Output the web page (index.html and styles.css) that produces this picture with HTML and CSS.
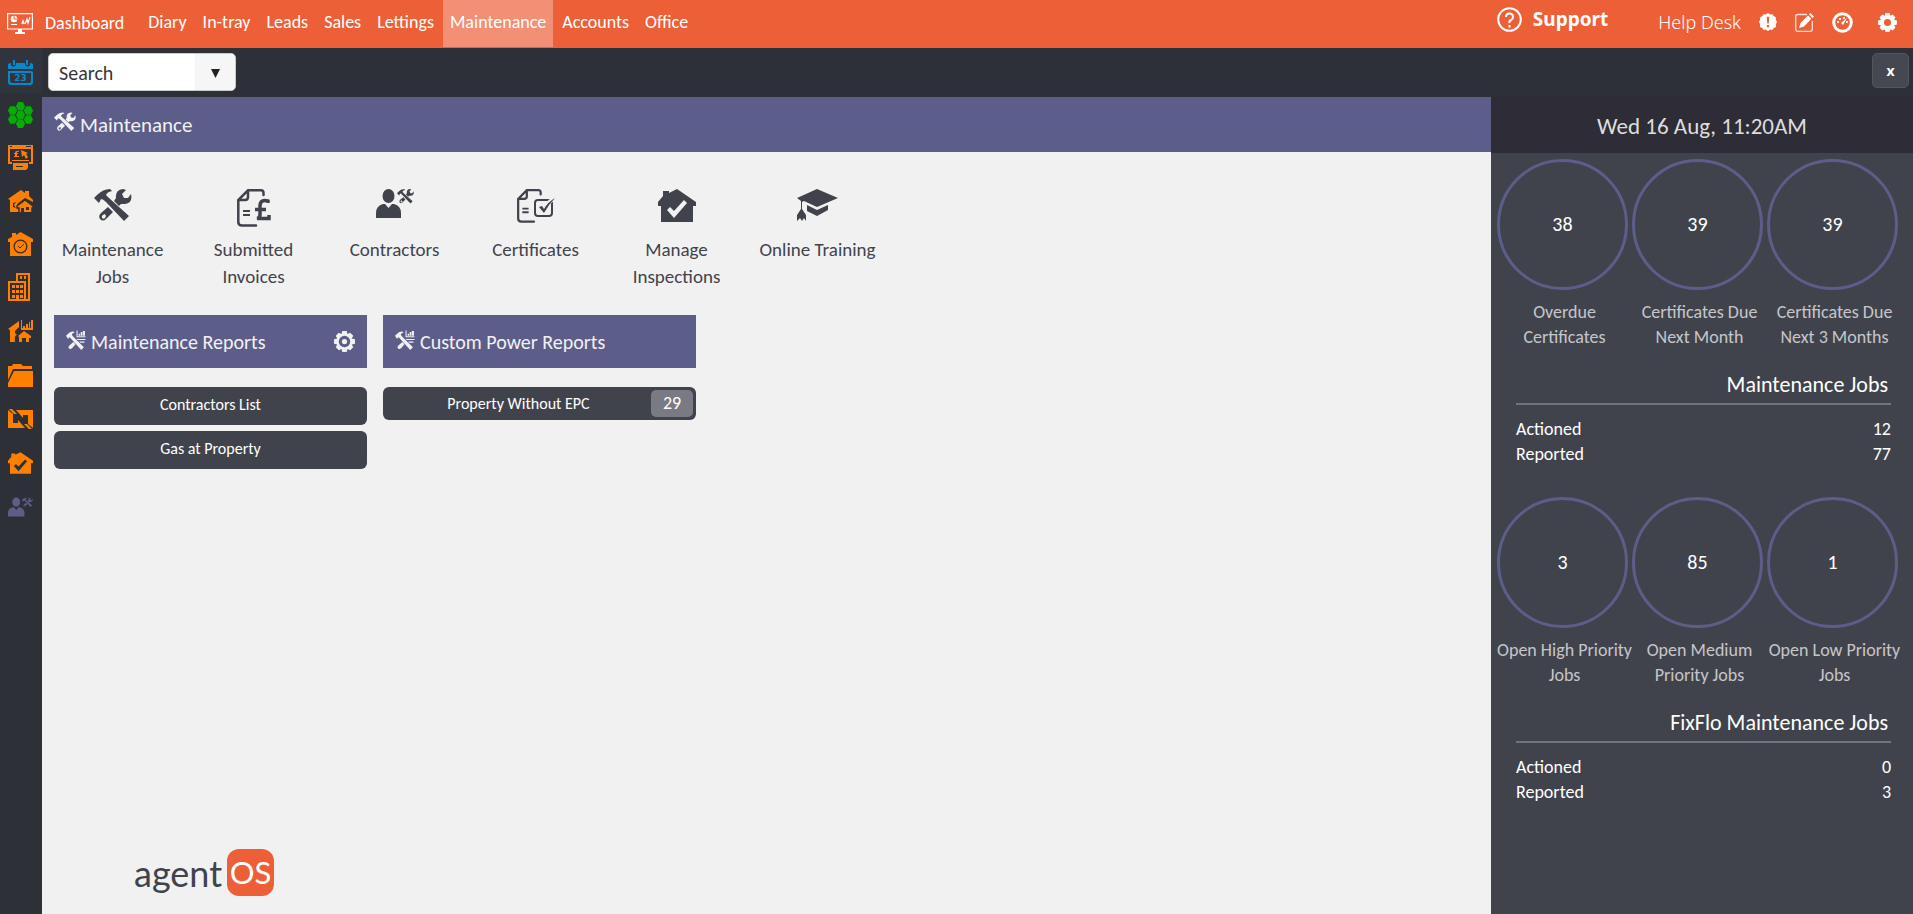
FILE: index.html
```html
<!DOCTYPE html>
<html lang="en">
<head>
    <meta charset="UTF-8">
    <meta name="viewport" content="width=device-width, initial-scale=1.0">
    <title>agentOS - Maintenance</title>
    <link rel="stylesheet" href="styles.css">
</head>
<body>
    <!-- shared icons -->
    <svg class="sprite" aria-hidden="true">
        <symbol id="tools" viewBox="0 0 38 33">
            <path d="M0 9L3 6Q9 0 16 0L18 2Q13 3 12 6L15 9L35 27L30 32L12 13Q9 10 7 10L5 14Z"/>
            <path d="M22 9Q21 1 29 0L32 1L28 5L30 9L34 9L37 5Q39 14 31 15L27 15L25 17L20 12Z"/>
            <path fill-rule="evenodd" d="M14 18L19 23L12 30Q9 33 6 30Q4 27 7 24ZM11 25Q7 26 8 29Q11 31 12 27Z"/>
        </symbol>
        <symbol id="tools-report" viewBox="0 0 38 38">
            <path d="M0 11L3 8Q8 2 14 3L16 5Q11 6 11 9L13 12L34 33L29 38L10 17Q8 14 6 14L4 17ZM14 23L18 27L12 34Q8 38 5 34Q4 31 7 29Z"/>
            <path d="M20 1h2v11h15v2H20zM24 7h3v4h-3zM28 4h3v7h-3zM32 2h4v9h-4zM20 17h17v2H22zM25 22h10v2h-8z"/>
        </symbol>
        <symbol id="contractor" viewBox="0 0 38 29">
            <ellipse cx="12.5" cy="7" rx="6" ry="7"/>
            <path d="M0 29V24Q0 17 7 15L9 15L12.500 19L16 15L18 15Q25 17 25 24V29Z"/>
            <use href="#tools" x="21" y="0" width="17" height="15"/>
        </symbol>
        <symbol id="house-check" viewBox="0 0 38 33">
            <path fill-rule="evenodd" d="M5 7V2H11V4L19 0L38 13V17H35V33H3V17H0V13ZM9 21L16 29L29 14L26 11L16 22L12 18Z"/>
        </symbol>
        <symbol id="document" viewBox="0 0 28 38">
            <path fill="none" stroke="currentColor" stroke-width="2.500" stroke-linecap="round" d="M26.500 6V4Q26.500 1.300 24 1.300H11L1.300 11V33Q1.300 36.500 5 36.500H19M11 2V8Q11 11 8 11H2"/>
            <path d="M6 21h7v2H6zM6 25h7v2H6z"/>
        </symbol>
        <symbol id="gear" viewBox="0 0 24 24">
            <path fill-rule="evenodd" d="M9.500 0h5l1 3.500 3-1.500 3.500 3.500-1.700 3 3.700 1v5l-3.700 1 1.700 3-3.500 3.500-3-1.500-1 3.500h-5l-1-3.500-3 1.500L2 18.500l1.700-3L0 14.500v-5l3.700-1L2 5.500 5.500 2l3 1.500zM12 7.500a4.500 4.500 0 1 0 0 9 4.500 4.500 0 0 0 0-9z"/>
        </symbol>
    </svg>

    <header class="topbar">
        <nav class="main-nav">
            <a class="home" href="#">
                <svg class="home-icon" viewBox="0 0 26 21"><path fill="none" stroke="currentColor" stroke-width="1.200" d="M.6.600h24.800v15.400H.6zM15 11l1-4 1 4M18 11l2-5 1 4 2-6"/><circle cx="7" cy="6" r="3.300"/><path stroke="#ec5f37" d="M7 2v4h4"/><path d="M4 11h6v1H4zM11 16h4v3h3v2H8v-2h3z"/></svg>
                Dashboard
            </a>
            <a href="#">Diary</a>
            <a href="#">In-tray</a>
            <a href="#">Leads</a>
            <a href="#">Sales</a>
            <a href="#">Lettings</a>
            <a class="active" href="#">Maintenance</a>
            <a href="#">Accounts</a>
            <a href="#">Office</a>
        </nav>
        <div class="top-tools">
            <a class="support" href="#">
                <svg width="25" height="25" viewBox="0 0 25 25"><path fill="none" stroke="currentColor" stroke-width="2" d="M12.500 1.200a11.300 11.300 0 1 0 0 22.600 11.300 11.300 0 0 0 0-22.600zM9 10Q9 6.500 12.500 6.500T16 10Q16 12 14 13T12.500 16M12.500 18v2.500"/></svg>
                Support
            </a>
            <a class="help" href="#">Help Desk</a>
            <div class="top-icons">
                <a href="#" aria-label="Alerts"><svg width="18" height="18" viewBox="0 0 24 24"><path fill-rule="evenodd" d="M9 2l3-2 3 2 3-.5L19.500 4l3 1.500V9L24 12l-1.500 3v3.500l-3 1.500L18 22.500l-3-.5-3 2-3-2-3 .500L4.500 20l-3-1.500V15L0 12l1.500-3V5.500l3-1.500L6 1.500zM10.300 5l.7 9h2l.7-9zM10.500 16v3h3v-3z"/></svg></a>
                <a href="#" aria-label="Edit"><svg width="19" height="19" viewBox="0 0 19 19"><path fill="none" stroke="currentColor" stroke-width="1.300" opacity=".8" d="M12 1.500H2.500Q.7 1.500.7 3V16.500Q.7 18.300 2.500 18.300H15.500Q17.300 18.300 17.300 16.500V8"/><path d="M4 15l1.500-5L13 2.500l3.300 3.300L9 13.500zM14 1.500L15.500 0 19 3.500 17.300 5z"/></svg></a>
                <a href="#" aria-label="Performance"><svg width="21" height="21" viewBox="0 0 21 21"><circle cx="10.500" cy="10.500" r="8.800" fill="none" stroke="currentColor" stroke-width="3"/><path d="M5 9h2v2H5zM7 6h2v2H7zM11 5h2v2h-2zM14 9h2v2h-2zM9 11l6-5-4 7z"/></svg></a>
                <a href="#" aria-label="Settings"><svg width="19" height="19"><use href="#gear"/></svg></a>
            </div>
        </div>
    </header>

    <div class="app">
        <nav class="sidebar">
            <a class="blue" href="#" aria-label="Calendar"><svg width="25" height="25" viewBox="0 0 25 25"><path fill-rule="evenodd" d="M0 9V5Q0 3 3 3V5Q5 8 8 5V3H17V5Q20 8 22 5V3Q25 3 25 5V9ZM3 11H22Q25 11 25 13V22Q25 25 22 25H3Q0 25 0 22V11ZM2 13V21Q2 23 4 23H21Q23 23 23 21V13Z"/><path d="M5 0h2v5H5zM18 0h2v5h-2z"/><text class="cal-day" x="12.500" y="21" text-anchor="middle">23</text></svg></a>
            <a class="green" href="#" aria-label="Network"><svg width="25" height="26" viewBox="0 0 25 26"><defs><path id="hex" d="M-4.600 0L-2.400-4.300H2.400L4.600 0 2.400 4.300H-2.400Z"/></defs><use href="#hex" x="12.500" y="4.300"/><use href="#hex" x="12.500" y="13"/><use href="#hex" x="12.500" y="21.700"/><use href="#hex" x="4.600" y="8.500"/><use href="#hex" x="20.400" y="8.500"/><use href="#hex" x="4.600" y="17.500"/><use href="#hex" x="20.400" y="17.500"/></svg></a>
            <a href="#" aria-label="Payments"><svg width="25" height="25" viewBox="0 0 25 25"><path fill-rule="evenodd" d="M0 0H25V19H21V17H23V4H2V17H4V19H0ZM2 1V2H4V1ZM18 1V2H23V1Z"/><path d="M13 5L20 8 18 9 20 12 18 14 16 10 14 12ZM4 15H21V16H4ZM5 18H20V23L18 25H5ZM6 12V11H7V9H6V8H7Q7 5 11 6V7Q8 6 9 8H10V9H9V11H11V12Z"/><path stroke="#2e3037" d="M8 21.500h7"/></svg></a>
            <a href="#" aria-label="Lettings"><svg width="25" height="22" viewBox="0 0 25 22"><path d="M0 9L13 0 17 3V1H21V6L25 10V12L17 8 9 14 11 17V22H2V10Z"/><path stroke="#2e3037" stroke-width="1.500" fill-rule="evenodd" d="M9 16L17 10 25 16V18H24V23H11V18H9Z"/><path fill="#2e3037" d="M13 18h3v4h-3zM18 17h3v3h-3zM5 13l3-1-2 3 2 3-3-1z"/></svg></a>
            <a href="#" aria-label="Property clock"><svg width="25" height="24" viewBox="0 0 25 24"><path fill-rule="evenodd" d="M4 5V1H8V3L12.500 0 25 7V10H23V24H2V10H0V7ZM12.500 7.500a7 7 0 1 0 0 14 7 7 0 0 0 0-14z"/><circle cx="12.500" cy="14.500" r="5.700"/><path fill="none" stroke="#2e3037" d="M10 14l2 2 4-4"/></svg></a>
            <a href="#" aria-label="Buildings"><svg width="25" height="28" viewBox="0 0 25 28"><path fill="none" stroke="currentColor" stroke-width="2" d="M9 8V1H21V27H1V9H17V27"/><path d="M12 3h2v3h-2zM16 3h2v3h-2zM4 12h3v3H4zM8 12h3v3H8zM12 12h3v3h-3zM4 17h3v3H4zM8 17h3v3H8zM12 17h3v3h-3zM4 22h3v3H4zM8 22h3v5H8zM12 22h3v3h-3z"/></svg></a>
            <a href="#" aria-label="Market reports"><svg width="25" height="22" viewBox="0 0 25 22"><path d="M0 9L11 1V7L7 11V13L9 15Q6 15 7 22H2V10ZM13 0h1v8h11v2H13zM15 6h2v2h-2zM18 4h2v4h-2zM21 2h1v6h-1zM23 0h2v8h-2z"/><path fill-rule="evenodd" d="M10 16L16 11 23 16V18H21V22H18V18H14V22H11V17Z"/></svg></a>
            <a href="#" aria-label="Files"><svg width="25" height="23" viewBox="0 0 25 23"><path d="M0 2H4L5 0H13L15 2H24V5H5L0 16ZM6 7H25V23H0V19Z"/></svg></a>
            <a href="#" aria-label="Transfers"><svg width="25" height="20" viewBox="0 0 25 20"><path d="M0 1L5 5V14H10V11L17 19H0ZM25 19L20 15V6H15V9L8 1H25ZM1 0H4L9 5H6ZM24 20H21L16 15H19Z"/></svg></a>
            <a href="#" aria-label="Inspections"><svg width="25" height="22"><use href="#house-check"/></svg></a>
            <a class="purple" href="#" aria-label="Contractors"><svg width="25" height="20"><use href="#contractor"/></svg></a>
        </nav>

        <div class="workspace">
            <div class="searchbar">
                <form class="search">
                    <input type="text" placeholder="Search" aria-label="Search">
                    <button type="button" aria-label="Search options"><svg width="9" height="9" viewBox="0 0 9 9"><path d="M0 0H9L4.500 9Z"/></svg></button>
                </form>
                <button class="close" type="button">x</button>
            </div>

            <div class="columns">
                <main class="content">
                    <h1 class="page-title"><svg width="22" height="20"><use href="#tools"/></svg>Maintenance</h1>

                    <div class="shortcuts">
                        <a href="#"><span class="pic"><svg width="38" height="33"><use href="#tools"/></svg></span>Maintenance Jobs</a>
                        <a href="#"><span class="pic"><svg width="34" height="38" viewBox="0 0 34 38"><use href="#document" width="28" height="38"/><path fill="none" stroke="#f1f1f1" stroke-width="7" d="M22 30V17Q22 11 31 12"/><path fill="none" stroke="currentColor" stroke-width="3.500" d="M31 14V12Q23 10 23 17V26Q23 29 20 29.500H32V26M18 20.500H29"/></svg></span>Submitted Invoices</a>
                        <a href="#"><span class="pic"><svg width="38" height="29"><use href="#contractor"/></svg></span>Contractors</a>
                        <a href="#"><span class="pic"><svg width="38" height="34" viewBox="0 0 38 34"><use href="#document" width="25" height="34"/><rect x="18" y="11" width="17" height="16" rx="3" fill="#f1f1f1" stroke="currentColor" stroke-width="2"/><path fill="none" stroke="#f1f1f1" stroke-width="4" d="M29 16l8-7"/><path d="M22 18l3-1 2 3Q31 13 38 9Q32 15 27 24Z"/></svg></span>Certificates</a>
                        <a href="#"><span class="pic"><svg width="38" height="33"><use href="#house-check"/></svg></span>Manage Inspections</a>
                        <a href="#"><span class="pic"><svg width="41" height="33" viewBox="0 0 41 33"><path d="M0 9L20 0 41 9 20 18 7 12 5 13V20L9 26V32L7 29 5 32 3 29 0 32V26L4 20V12ZM10 16L20 21 31 16V21L20 27 10 22Z"/></svg></span>Online Training</a>
                    </div>

                    <div class="reports">
                        <section class="report">
                            <h2><svg width="20" height="20"><use href="#tools-report"/></svg>Maintenance Reports
                                <button class="report-settings" type="button" aria-label="Report settings"><svg width="21" height="21" viewBox="0 0 24 24"><use href="#gear"/><circle cx="12" cy="12" r="6.500" fill="#5d5d8a"/><circle cx="12" cy="12" r="3"/></svg></button>
                            </h2>
                            <button class="report-link" type="button">Contractors List</button>
                            <button class="report-link" type="button">Gas at Property</button>
                        </section>
                        <section class="report">
                            <h2><svg width="20" height="20"><use href="#tools-report"/></svg>Custom Power Reports</h2>
                            <button class="report-link counted" type="button"><span>Property Without EPC</span><b>29</b></button>
                        </section>
                    </div>

                    <div class="logo"><span>agent</span><b>OS</b></div>
                </main>

                <aside class="stats">
                    <div class="clock">Wed 16 Aug, 11:20AM</div>
                    <div class="rings">
                        <div class="ring"><strong>38</strong><span>Overdue Certificates</span></div>
                        <div class="ring"><strong>39</strong><span>Certificates Due Next Month</span></div>
                        <div class="ring"><strong>39</strong><span>Certificates Due Next 3 Months</span></div>
                    </div>
                    <section class="jobs">
                        <h3>Maintenance Jobs</h3>
                        <dl>
                            <div><dt>Actioned</dt><dd>12</dd></div>
                            <div><dt>Reported</dt><dd>77</dd></div>
                        </dl>
                    </section>
                    <div class="rings">
                        <div class="ring"><strong>3</strong><span>Open High Priority Jobs</span></div>
                        <div class="ring"><strong>85</strong><span>Open Medium Priority Jobs</span></div>
                        <div class="ring"><strong>1</strong><span>Open Low Priority Jobs</span></div>
                    </div>
                    <section class="jobs">
                        <h3>FixFlo Maintenance Jobs</h3>
                        <dl>
                            <div><dt>Actioned</dt><dd>0</dd></div>
                            <div><dt>Reported</dt><dd>3</dd></div>
                        </dl>
                    </section>
                </aside>
            </div>
        </div>
    </div>
</body>
</html>
```
FILE: styles.css
```css
* {
    box-sizing: border-box;
}

body {
    margin: 0;
    min-height: 100vh;
    display: flex;
    flex-direction: column;
    font-family: Calibri, Carlito, Lato, sans-serif;
    font-size: 18px;
    color: #41434c;
    background: #2e3037;
}

a {
    color: inherit;
    text-decoration: none;
}

button,
input {
    font: inherit;
    border: 0;
}

svg {
    display: block;
    flex: none;
    fill: currentColor;
}

.sprite {
    position: absolute;
    width: 0;
    height: 0;
}

/* top bar */
.topbar {
    display: flex;
    justify-content: space-between;
    height: 48px;
    background: #ec5f37;
    color: #fff;
}

.main-nav {
    display: flex;
    height: 47px;
    line-height: 45px;
}

.main-nav a {
    padding: 0 7px;
    margin-right: 2px;
}

.main-nav .home {
    display: flex;
    align-items: center;
    gap: 12px;
    margin-right: 10px;
}

.home-icon {
    width: 26px;
    height: 21px;
}

.main-nav .active {
    background: #f28f74;
}

.top-tools {
    display: flex;
    align-items: center;
    padding: 0 16px 4px 0;
    font-family: "Noto Sans", sans-serif;
}

.support {
    display: flex;
    align-items: center;
    align-self: flex-start;
    gap: 11px;
    height: 38px;
    margin-right: 50px;
    font-size: 19px;
    font-weight: bold;
}

.help {
    margin-right: 18px;
    font-weight: 300;
}

.top-icons {
    display: flex;
    align-items: center;
    gap: 18px;
}

.top-icons a:last-child {
    margin-left: 7px;
}

/* left icon bar */
.app {
    display: flex;
    flex: 1;
}

.sidebar {
    width: 42px;
    color: #ff7f00;
}

.sidebar a {
    display: flex;
    justify-content: center;
    align-items: center;
    height: 43px;
    padding-right: 2px;
}

.sidebar a:nth-child(n+6) {
    height: 44px;
}

.sidebar .blue {
    height: 45px;
    padding-top: 3px;
    background: #30343c;
    color: #0b87c9;
}

.sidebar .green {
    color: #06ad06;
}

.sidebar .purple {
    color: #5d5d8a;
}

.cal-day {
    font: bold 9px "DejaVu Sans", sans-serif;
}

.workspace {
    display: flex;
    flex: 1;
    flex-direction: column;
}

/* search */
.searchbar {
    display: flex;
    justify-content: space-between;
    align-items: flex-start;
    height: 49px;
    padding: 5px 4px 0 6px;
}

.search {
    display: flex;
    width: 188px;
    height: 38px;
    overflow: hidden;
    border: 1px solid #c9c9c9;
    border-radius: 5px;
    background: #fff;
}

.search input {
    flex: 1;
    min-width: 0;
    padding: 2px 10px 0;
    font-size: 20px;
}

.search input::placeholder {
    color: #35363c;
}

.search button {
    display: flex;
    justify-content: center;
    align-items: center;
    width: 40px;
    padding: 2px 0 0;
    background: #f6f6f6;
    color: #222;
}

.close {
    width: 37px;
    height: 35px;
    border: 1px solid #53555f;
    border-radius: 5px;
    background: #454751;
    color: #fff;
    font: bold 14px "Noto Sans", sans-serif;
}

.columns {
    display: flex;
    flex: 1;
}

/* main area */
.content {
    display: flex;
    flex: 1;
    flex-direction: column;
    background: #f1f1f1;
}

.page-title {
    display: flex;
    align-items: center;
    gap: 4px;
    height: 55px;
    margin: 0;
    padding: 0 12px;
    background: #5d5d8a;
    color: #f1f1f1;
    font-size: 21px;
    font-weight: normal;
}

.page-title svg {
    margin-bottom: 6px;
}

.shortcuts {
    display: flex;
    flex-wrap: wrap;
    min-height: 163px;
    padding-top: 37px;
    font-size: 19px;
}

.shortcuts a {
    width: 141px;
    padding: 0 16px;
    text-align: center;
    line-height: 27px;
}

.pic {
    display: flex;
    justify-content: center;
    height: 47px;
}

.shortcuts a:last-child {
    padding: 0 8px;
}

.reports {
    display: flex;
    align-items: flex-start;
    gap: 16px;
    padding: 0 12px;
}

.report {
    display: flex;
    flex-direction: column;
    gap: 6px;
    width: 313px;
}

.report h2 {
    display: flex;
    align-items: center;
    gap: 5px;
    height: 53px;
    margin: 0 0 13px;
    padding: 0 12px;
    background: #5d5d8a;
    color: #f1f1f1;
    font-size: 20px;
    font-weight: normal;
}

.report h2 > svg {
    margin-bottom: 4px;
}

.report-settings {
    margin-left: auto;
    padding: 0;
    background: none;
    color: #f1f1f1;
}

.report-link {
    height: 38px;
    padding: 0 3px 4px;
    border-radius: 6px;
    background: #41434c;
    color: #fff;
    font-size: 16px;
}

.counted {
    display: flex;
    align-items: center;
    height: 33px;
    padding-bottom: 0;
}

.counted span {
    flex: 1;
}

.counted b {
    width: 42px;
    border-radius: 5px;
    background: #7a7a84;
    font-size: 18px;
    font-weight: normal;
    line-height: 27px;
}

.logo {
    display: flex;
    align-items: center;
    gap: 5px;
    margin: auto 0 18px 92px;
    font-family: Lato, sans-serif;
    font-size: 36px;
}

.logo b {
    width: 47px;
    border-radius: 12px;
    background: #ec5f37;
    color: #fff;
    font-size: 31px;
    font-weight: normal;
    line-height: 47px;
    text-align: center;
}

/* right panel */
.stats {
    width: 422px;
    background: #41434c;
    color: #fff;
}

.clock {
    height: 56px;
    background: #2e2d37;
    color: #ddd;
    font-size: 23px;
    line-height: 58px;
    text-align: center;
}

.rings {
    display: flex;
    padding: 6px 6px 0;
}

.ring {
    width: 135px;
    color: #c6c6ca;
    line-height: 25px;
    text-align: center;
}

.ring strong {
    display: block;
    width: 131px;
    height: 131px;
    margin-bottom: 10px;
    border: 3px solid #5d5d8a;
    border-radius: 50%;
    color: #fff;
    font-size: 20px;
    font-weight: normal;
    line-height: 125px;
}

.jobs {
    padding: 17px 22px 24px 25px;
}

.jobs h3 {
    margin: 0 0 12px;
    padding-right: 3px;
    border-bottom: 2px solid #72747c;
    font-size: 22px;
    font-weight: normal;
    line-height: 36px;
    text-align: right;
}

.jobs dl {
    margin: 0;
    line-height: 25px;
}

.jobs dl div {
    display: flex;
    justify-content: space-between;
}

.jobs dd {
    margin: 0;
}
```
